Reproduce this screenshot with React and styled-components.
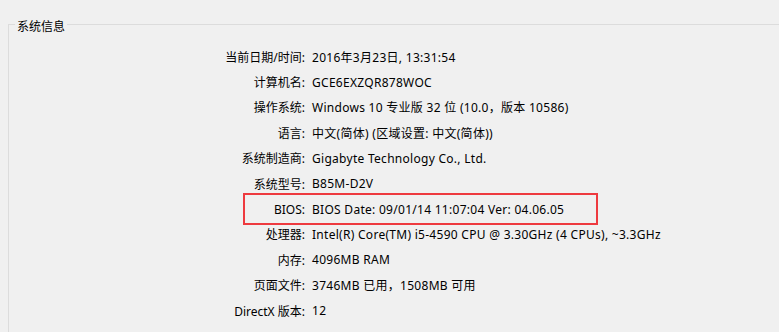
import React from 'react'
import styled, { createGlobalStyle } from 'styled-components'

const GlobalStyle = createGlobalStyle`
  html, body {
    margin: 0;
    padding: 0;
    background: #f0f0f0;
    overflow: hidden;
  }
  body {
    font-family: 'Noto Sans', 'Noto Sans CJK SC', sans-serif;
    font-size: 12px;
    color: #000;
  }
`

const Page = styled.div`
  width: 779px;
  height: 332px;
  overflow: hidden;
  padding-top: 14px;
  box-sizing: border-box;
`

const Group = styled.fieldset`
  margin: 0 0 0 8px;
  padding: 0;
  width: 900px;
  height: 400px;
  border: 1px solid #dcdcdc;
  min-width: 0;
`

const Legend = styled.legend`
  margin-left: 6px;
  padding: 6px 2px 0;
  line-height: 14px;
`

const Rows = styled.div`
  display: grid;
  grid-template-columns: 120px 1fr;
  grid-auto-rows: 25.4px;
  column-gap: 7px;
  align-items: center;
  padding: 10px 0 0 176px;
`

const Row = styled.div`
  display: contents;
`

const Label = styled.div`
  text-align: right;
  white-space: nowrap;
`

const Value = styled.div`
  white-space: nowrap;
  letter-spacing: 0.28px;
  position: relative;

  ${({ $highlight }) =>
    $highlight &&
    `
    &::after {
      content: '';
      position: absolute;
      left: -69px;
      top: -8px;
      width: 351px;
      height: 28px;
      border: 2px solid #ee3a3f;
    }
  `}
`

const info = [
  ['当前日期/时间:', '2016年3月23日, 13:31:54'],
  ['计算机名:', 'GCE6EXZQR878WOC'],
  ['操作系统:', 'Windows 10 专业版 32 位 (10.0，版本 10586)'],
  ['语言:', '中文(简体) (区域设置: 中文(简体))'],
  ['系统制造商:', 'Gigabyte Technology Co., Ltd.'],
  ['系统型号:', 'B85M-D2V'],
  ['BIOS:', 'BIOS Date: 09/01/14 11:07:04 Ver: 04.06.05', true],
  ['处理器:', 'Intel(R) Core(TM) i5-4590 CPU @ 3.30GHz (4 CPUs), ~3.3GHz'],
  ['内存:', '4096MB RAM'],
  ['页面文件:', '3746MB 已用，1508MB 可用'],
  ['DirectX 版本:', '12'],
]

const App = () => {
  return (
    <>
      <GlobalStyle />
      <Page>
        <Group>
          <Legend>系统信息</Legend>
          <Rows>
            {info.map(([label, value, highlight]) => (
              <Row key={label}>
                <Label>{label}</Label>
                <Value $highlight={highlight}>{value}</Value>
              </Row>
            ))}
          </Rows>
        </Group>
      </Page>
    </>
  )
}

export default App
